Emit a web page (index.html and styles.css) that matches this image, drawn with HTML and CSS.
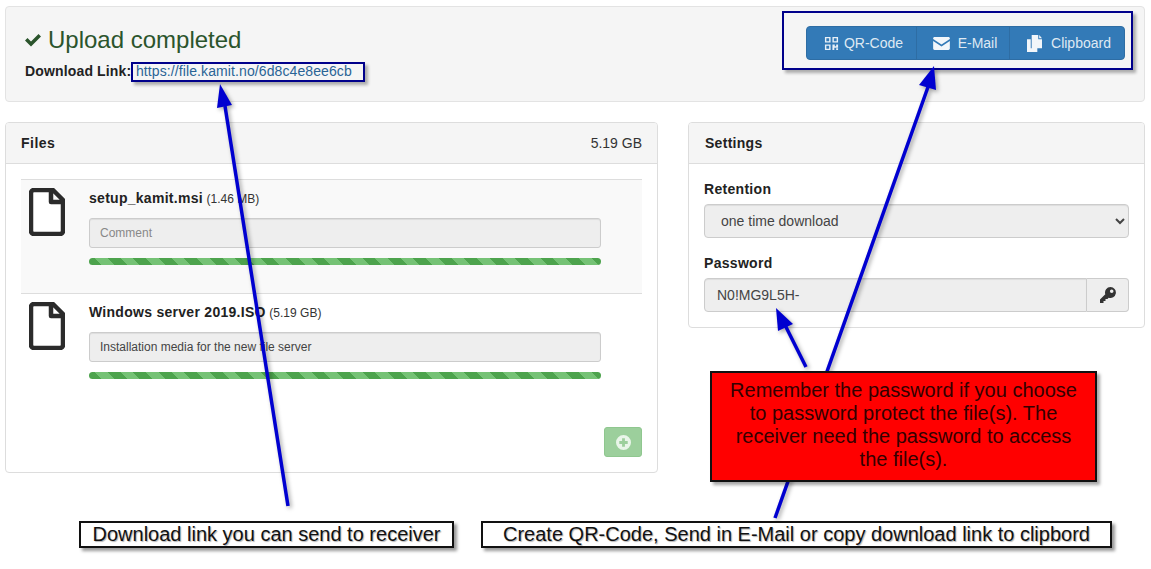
FILE: index.html
```html
<!DOCTYPE html>
<html lang="en">
<head>
    <meta charset="UTF-8">
    <meta name="viewport" content="width=device-width, initial-scale=1.0">
    <title>Upload completed</title>
    <link rel="stylesheet" href="styles.css">
</head>
<body>
    <main>
        <section class="caixaTopo">
            <div>
                <h1 class="titulo">
                    <svg class="iconeCheck" viewBox="0 0 18 14"><path d="M1 7.5 3.5 5 7 8.5 14.5 1 17 3.500 7 13.500Z"/></svg>
                    Upload completed
                </h1>
                <p class="linhaLink"><b>Download Link:</b> <a href="#">https://file.kamit.no/6d8c4e8ee6cb</a></p>
            </div>
            <div class="grupoBotoes">
                <button class="botao botaoQr">
                    <svg class="icone" viewBox="0 0 16 16"><path d="M1 1h6v6H1zM2.500 2.500v3h3v-3zM9 1h6v6H9zM10.500 2.500v3h3v-3zM1 9h6v6H1zM2.500 10.500v3h3v-3zM9 9h2.500v2H13V9h2v3.500h-4V15H9zM13 13h2v2h-2z" fill-rule="evenodd"/></svg>
                    QR-Code
                </button>
                <button class="botao botaoMail">
                    <svg class="iconeMail" viewBox="0 0 18 14"><path d="M0 2.200V1.500C0 .7.700 0 1.500 0h15c.8 0 1.500.7 1.500 1.500v.7L9 8.200zM0 4.200l9 6 9-6v8.300c0 .8-.7 1.500-1.500 1.500h-15C.7 14 0 13.300 0 12.500z"/></svg>
                    E-Mail
                </button>
                <button class="botao botaoClip">
                    <svg class="iconeClip" viewBox="0 0 16 18"><path d="M0 4.500h4V14h7v4H0zM5 0h7v4.500h4V14H5zM13 0l3 3.500h-3z"/></svg>
                    Clipboard
                </button>
            </div>
        </section>

        <div class="colunas">
            <section class="painel painelArquivos">
                <header class="painelTitulo">
                    <b class="tituloFiles">Files</b>
                    <span class="total">5.19 GB</span>
                </header>
                <div class="painelCorpo">
                    <div class="arquivo arquivoPar">
                        <svg class="iconeArquivo" viewBox="0 0 36 48"><path d="M5 2h19l10 10v31a3 3 0 0 1-3 3H5a3 3 0 0 1-3-3V5a3 3 0 0 1 3-3zM22 3v11h11"/></svg>
                        <div class="arquivoInfo">
                            <p class="arquivoNome"><b>setup_kamit.msi</b> <small>(1.46 MB)</small></p>
                            <input class="campo" type="text" placeholder="Comment" readonly>
                            <div class="progresso"></div>
                        </div>
                    </div>
                    <div class="arquivo">
                        <svg class="iconeArquivo" viewBox="0 0 36 48"><path d="M5 2h19l10 10v31a3 3 0 0 1-3 3H5a3 3 0 0 1-3-3V5a3 3 0 0 1 3-3zM22 3v11h11"/></svg>
                        <div class="arquivoInfo">
                            <p class="arquivoNome"><b>Windows server 2019.ISO</b> <small>(5.19 GB)</small></p>
                            <input class="campo" type="text" value="Installation media for the new file server" readonly>
                            <div class="progresso"></div>
                        </div>
                    </div>
                    <div class="rodapeArquivos">
                        <button class="botaoAdd">
                            <svg viewBox="0 0 16 16"><path d="M8 0a8 8 0 1 0 0 16A8 8 0 0 0 8 0zM6.500 3.500h3v3h3v3h-3v3h-3v-3h-3v-3h3z" fill-rule="evenodd"/></svg>
                        </button>
                    </div>
                </div>
            </section>

            <section class="painel painelConfig">
                <header class="painelTitulo"><b class="tituloSettings">Settings</b></header>
                <div class="painelCorpo corpoConfig">
                    <label class="rotulo">Retention</label>
                    <select class="campo campoAlto">
                        <option>one time download</option>
                    </select>
                    <label class="rotulo rotuloSenha">Password</label>
                    <div class="grupoSenha">
                        <input class="campo campoAlto campoSenha" type="text" value="N0!MG9L5H-" readonly>
                        <button class="botaoChave">
                            <svg viewBox="0 0 16 16"><path d="M10.500 0a5.500 5.500 0 1 1-1.900 10.700L7.500 12H5.500v2h-2v2H0v-3.500l5.300-5.300A5.500 5.500 0 0 1 10.500 0zM11.700 2.500a1.800 1.800 0 1 0 0 3.600 1.800 1.800 0 0 0 0-3.600z" fill-rule="evenodd"/></svg>
                        </button>
                    </div>
                </div>
            </section>
        </div>
    </main>

    <!-- notas desenhadas por cima do print -->
    <div class="marca marcaLink"></div>
    <div class="marca marcaBotoes"></div>

    <svg class="setas" viewBox="0 0 1151 569">
        <g>
            <path class="haste" d="M288 506 225 106"/>
            <path d="M220 84 217 108 232 105Z"/>
            <path class="haste" d="M775 518 928 87"/>
            <path d="M934 66 919 85 936 90Z"/>
            <path class="haste" d="M806 367 785 325"/>
            <path d="M776 308 778 331 793 324Z"/>
        </g>
    </svg>

    <div class="notaVermelha">Remember the password if you choose to password protect the file(s). The receiver need the password to access the file(s).</div>
    <div class="nota notaLink">Download link you can send to receiver</div>
    <div class="nota notaBotoes">Create QR-Code, Send in E-Mail or copy download link to clipbord</div>
</body>
</html>
```

FILE: styles.css
```css
* {
    box-sizing: border-box;
    padding: 0;
    margin: 0;
}
body {
    position: relative;
    height: 569px;
    overflow: hidden;
    background-color: #fff;
    color: #333;
    font-family: "Liberation Sans", Arial, sans-serif;
    font-size: 13px;
}
main {
    padding: 6px 6px 0 5px;
}
b {
    color: #222;
    font-size: 14px;
    letter-spacing: 0.28px;
}
.tituloFiles {
    letter-spacing: 0.5px;
}
.tituloSettings {
    margin-left: 1px;
}
.caixaTopo {
    display: flex;
    justify-content: space-between;
    height: 96px;
    padding: 19px 19px 19px 18px;
    background-color: #f5f5f5;
    border: 1px solid #e3e3e3;
    border-radius: 4px;
}
.titulo {
    display: flex;
    align-items: center;
    gap: 6px;
    height: 28px;
    color: #2b542c;
    font-size: 24px;
    font-weight: 400;
}
.iconeCheck {
    width: 18px;
    height: 14px;
    fill: #2b542c;
}
.linhaLink {
    margin-top: 9px;
    padding-left: 1px;
    line-height: 17px;
}
.linhaLink b {
    letter-spacing: 0.15px;
}
.linhaLink a {
    margin-left: 1px;
    color: #2a6496;
    font-size: 14px;
    letter-spacing: 0.1px;
    text-decoration: none;
}
.grupoBotoes {
    display: flex;
    height: 34px;
    background-color: #337ab7;
    border: 1px solid #2e6da4;
    border-radius: 4px;
}
.botao {
    display: flex;
    align-items: center;
    justify-content: center;
    padding-left: 4px;
    background: none;
    border: none;
    color: #dfe9f3;
    font-family: inherit;
    font-size: 14px;
}
.botaoQr {
    gap: 5px;
    width: 110px;
    border-right: 1px solid #2e6da4;
}
.botaoMail {
    gap: 8px;
    width: 93px;
    border-right: 1px solid #2e6da4;
}
.botaoClip {
    gap: 9px;
    width: 114px;
}
.icone {
    width: 15px;
    height: 15px;
    fill: #e8f0f7;
}
.iconeMail {
    width: 17px;
    height: 13px;
    fill: #f2f6fa;
}
.iconeClip {
    width: 15px;
    height: 17px;
    fill: #f2f6fa;
}
.colunas {
    display: flex;
    align-items: flex-start;
    gap: 30px;
    margin-top: 20px;
}
.painel {
    background-color: #fff;
    border: 1px solid #ddd;
    border-radius: 4px;
}
.painelArquivos {
    width: 653px;
    height: 351px;
}
.painelConfig {
    width: 457px;
    height: 206px;
}
.painelTitulo {
    display: flex;
    justify-content: space-between;
    align-items: center;
    height: 41px;
    padding: 0 15px;
    background-color: #f5f5f5;
    border-bottom: 1px solid #ddd;
    border-radius: 3px 3px 0 0;
}
.total {
    font-size: 14px;
}
.painelCorpo {
    padding: 15px;
}
.arquivo {
    display: flex;
    height: 114px;
    padding: 8px 41px 0 8px;
    border-top: 1px solid #ddd;
}
.arquivoPar {
    background-color: #f9f9f9;
}
.iconeArquivo {
    flex: none;
    width: 36px;
    height: 48px;
    fill: #fff;
    stroke: #2b2b2b;
    stroke-width: 4.500;
    stroke-linejoin: round;
}
.arquivoInfo {
    flex: 1;
    margin-left: 24px;
}
.arquivoNome {
    height: 30px;
    line-height: 20px;
}
.arquivoNome small {
    font-size: 12px;
}
.campo {
    display: block;
    width: 100%;
    height: 30px;
    padding: 0 10px;
    background-color: #eee;
    border: 1px solid #ccc;
    border-radius: 3px;
    box-shadow: inset 0 1px 1px rgba(0, 0, 0, 0.075);
    color: #444;
    font-family: inherit;
    font-size: 12px;
}
.campo::placeholder {
    color: #888;
}
.campoAlto {
    height: 34px;
    padding: 0 12px;
    font-size: 14px;
    border-radius: 4px;
}
.progresso {
    height: 7px;
    margin-top: 10px;
    border-radius: 4px;
    background-color: #5cb85c;
    background-image: repeating-linear-gradient(45deg, #4da34d 0, #4da34d 9px, #75c275 9px, #75c275 18px);
}
.rodapeArquivos {
    display: flex;
    justify-content: flex-end;
    margin-top: 20px;
}
.botaoAdd {
    display: flex;
    align-items: center;
    justify-content: center;
    width: 38px;
    height: 30px;
    background-color: #9ccf9c;
    border: 1px solid #8fc78f;
    border-radius: 3px;
}
.botaoAdd svg {
    width: 15px;
    height: 15px;
    fill: #e9f5e9;
}
.rotulo {
    display: block;
    color: #222;
    font-size: 14px;
    font-weight: 700;
    letter-spacing: 0.3px;
    line-height: 18px;
}
.corpoConfig {
    padding-top: 16px;
}
.corpoConfig .campoAlto {
    margin-top: 6px;
}
.rotuloSenha {
    margin-top: 16px;
}
.grupoSenha {
    display: flex;
}
.campoSenha {
    flex: 1;
    border-radius: 4px 0 0 4px;
}
.botaoChave {
    display: flex;
    align-items: center;
    justify-content: center;
    width: 42px;
    height: 34px;
    margin-top: 6px;
    background-color: #eee;
    border: 1px solid #ccc;
    border-left: none;
    border-radius: 0 4px 4px 0;
}
.botaoChave svg {
    width: 16px;
    height: 16px;
    fill: #333;
}
.marca {
    position: absolute;
    border: 2px solid #00008b;
    box-shadow: 3px 3px 3px rgba(0, 0, 0, 0.3);
}
.marcaLink {
    left: 131px;
    top: 62px;
    width: 234px;
    height: 20px;
}
.marcaBotoes {
    left: 782px;
    top: 11px;
    width: 351px;
    height: 59px;
}
.setas {
    position: absolute;
    left: 0;
    top: 0;
    width: 1151px;
    height: 569px;
}
.setas g {
    fill: #0000d0;
    filter: drop-shadow(2px 2px 2px rgba(0, 0, 0, 0.35));
}
.haste {
    fill: none;
    stroke: #0000d0;
    stroke-width: 3.500;
}
.notaVermelha {
    position: absolute;
    left: 710px;
    top: 371px;
    width: 387px;
    height: 111px;
    padding: 6px 14px;
    background-color: #f00;
    border: 2px solid #111;
    box-shadow: 3px 3px 3px rgba(0, 0, 0, 0.35);
    color: #300;
    font-size: 20px;
    line-height: 23px;
    text-align: center;
}
.nota {
    position: absolute;
    top: 521px;
    height: 27px;
    background-color: #fff;
    border: 2px solid #111;
    box-shadow: 3px 3px 3px rgba(0, 0, 0, 0.4);
    color: #111;
    font-size: 20px;
    line-height: 23px;
    text-align: center;
    text-shadow: 1px 1px 1px rgba(0, 0, 0, 0.3);
    white-space: nowrap;
}
.notaLink {
    left: 79px;
    width: 375px;
}
.notaBotoes {
    left: 481px;
    width: 631px;
}
```
